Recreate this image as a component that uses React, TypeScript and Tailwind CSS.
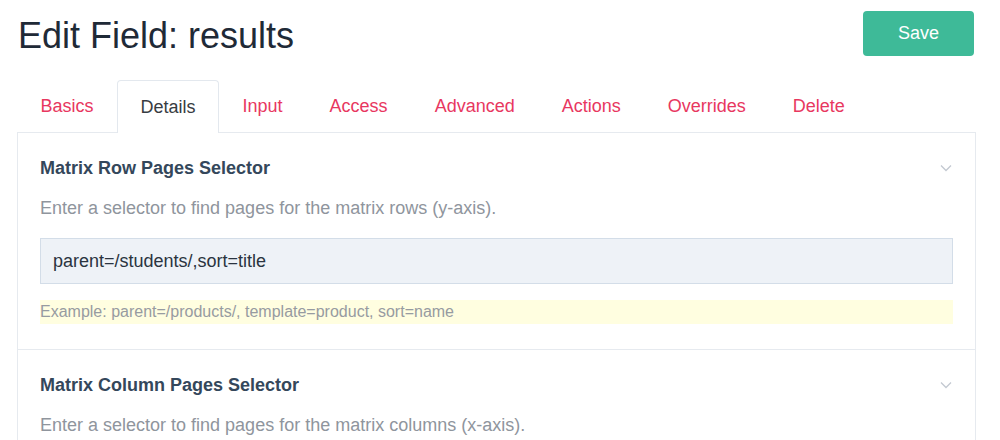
import React, { useState } from 'react';

const tabs = ['Basics', 'Details', 'Input', 'Access', 'Advanced', 'Actions', 'Overrides', 'Delete'];

const fields = [
    {
        label: 'Matrix Row Pages Selector',
        description: 'Enter a selector to find pages for the matrix rows (y-axis).',
        value: 'parent=/students/,sort=title',
        note: 'Example: parent=/products/, template=product, sort=name',
    },
    {
        label: 'Matrix Column Pages Selector',
        description: 'Enter a selector to find pages for the matrix columns (x-axis).',
        value: '',
        note: '',
    },
];

const Chevron: React.FC = () => (
    <svg width="12" height="8" viewBox="0 0 12 8" fill="none" className="text-[#c3c9d1]">
        <path d="M1 1.5 L6 6.5 L11 1.5" stroke="currentColor" strokeWidth="1.3" />
    </svg>
);

const App: React.FC = () => {
    const [active, setActive] = useState('Details');
    const [values, setValues] = useState(fields.map(f => f.value));

    return (
        <div className="w-[1000px] h-[440px] overflow-hidden bg-white font-['Liberation_Sans',Arial,sans-serif]">
            {/* header */}
            <div className="flex items-start justify-between pl-[18px] pr-[26px]">
                <h1 className="mt-[18px] text-[36px] leading-none text-[#1f2a37]">Edit Field: results</h1>
                <button className="mt-[11px] h-[45px] w-[111px] rounded-[4px] bg-[#3eba98] text-[18px] text-white">Save</button>
            </div>

            {/* tabs */}
            <div className="mt-[24px] flex pl-[17px]">
                {tabs.map(tab => (
                    <button
                        key={tab}
                        onClick={() => setActive(tab)}
                        className={
                            tab === active
                                ? 'relative z-10 -mb-px flex h-[53px] items-center rounded-t-[4px] border border-b-0 border-[#e3e8ee] bg-white px-[22.5px] text-[18px] text-[#373c42]'
                                : 'flex h-[52px] items-center px-[23.5px] text-[18px] text-[#e8375f]'
                        }
                    >
                        {tab}
                    </button>
                ))}
            </div>

            {/* panel */}
            <div className="ml-[17px] w-[959px] border border-[#e6eaef]">
                {fields.map((f, i) => (
                    <div key={f.label} className={i > 0 ? 'border-t border-[#e6eaef] px-[22px] pt-[24px] pb-[25px]' : 'px-[22px] pt-[24px] pb-[25px]'}>
                        <div className="flex items-center justify-between pr-[1px]">
                            <h3 className="text-[18px] font-bold leading-[22px] text-[#34475b]">{f.label}</h3>
                            <Chevron />
                        </div>
                        <p className="mt-[18px] text-[18px] leading-[22px] text-[#8f959d]">{f.description}</p>
                        {f.note && (
                            <>
                                <input
                                    value={values[i]}
                                    onChange={e => setValues(values.map((v, j) => (j === i ? e.target.value : v)))}
                                    className="mt-[19px] block h-[46px] w-[913px] border border-[#d3dde8] bg-[#eef2f7] px-[12px] text-[18px] text-[#2a3440] outline-none"
                                />
                                <p className="mt-[16px] w-[913px] bg-[#fffee0] text-[16px] leading-[24px] text-[#979ba1]">{f.note}</p>
                            </>
                        )}
                    </div>
                ))}
            </div>
        </div>
    );
};

export default App;
